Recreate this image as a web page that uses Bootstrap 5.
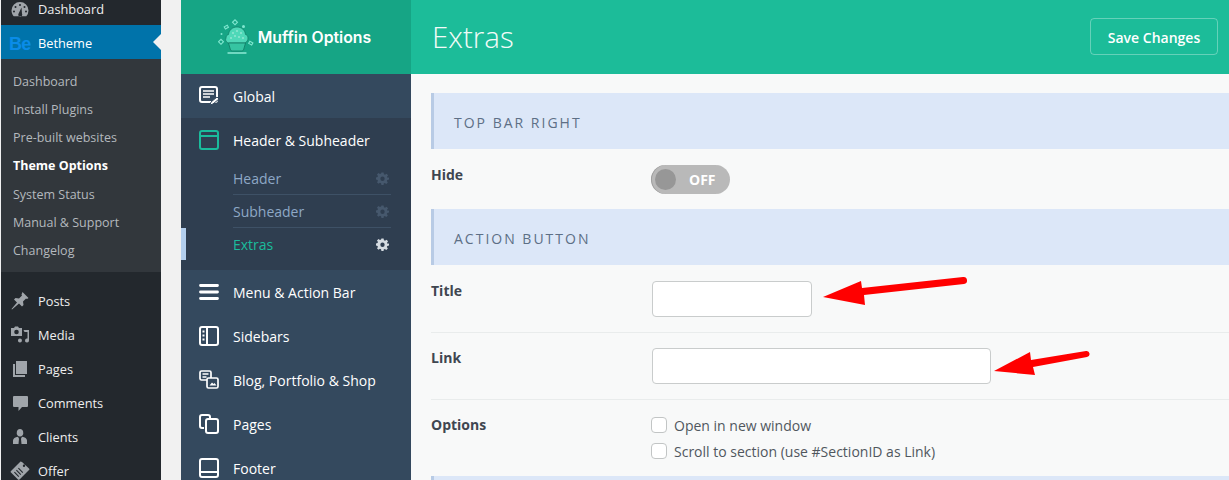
<!DOCTYPE html>
<html lang="en">
<head>
<meta charset="utf-8">
<title>Muffin Options</title>
<link href="https://cdn.jsdelivr.net/npm/bootstrap@5.3.0/dist/css/bootstrap.min.css" rel="stylesheet">
<style>
html,body{height:480px;overflow:hidden}
body{font-family:"Open Sans","Noto Sans",sans-serif;background:#f1f1f1;font-size:14px;color:#3c434a}
.shell{height:480px;overflow:hidden}
.wp-side{width:160px;margin-left:1px;margin-right:20px;background:#23282d;flex:none;height:488px;margin-top:-8px}
.wp-row{height:34px;flex:none;color:#eee;font-size:12.8px;padding:3px 0 0 9px;gap:8px;text-decoration:none}
.wp-row svg{width:20px;height:20px;flex:none;fill:#a0a5aa}
.wp-first{height:33px}
.wp-active{background:#0073aa;color:#fff;position:relative}
.wp-active::after{content:"";position:absolute;right:0;top:9px;border:8px solid transparent;border-right-color:#f1f1f1;border-left-width:0}
.be-logo{width:20px;font:900 18px/1 "Liberation Sans",sans-serif;color:#0a8ce8;letter-spacing:-.8px;margin-left:-1px;margin-right:1px}
.wp-sub{background:#32373c;padding:8px 0;margin-bottom:11px;flex:none}
.wp-sub a{display:block;height:28.15px;line-height:30px;font-size:12.5px;padding-left:12px;color:#b4b9be;text-decoration:none}
.wp-sub a.on{color:#fff;font-weight:700}
.mf-side{width:230px;flex:none;background:#34495e;position:relative}
.mf-logo{height:74px;background:#16a585;color:#fff;font:600 15.8px "Inter",sans-serif;gap:4px;padding-right:3px}
.mf-logo svg{width:36px;height:36px}
.mf-row{height:44px;padding-left:18px;gap:14px;color:#fff;font-size:14px;text-decoration:none}
.mf-row svg{width:20px;height:20px;flex:none;fill:none;stroke:#fff;stroke-width:2}
.mf-open{background:#2f3e50;height:152px}
.mf-open .mf-row svg{stroke:#1abc9c}
.mf-subs{padding:0 20px 0 52px}
.mf-subs a{height:33px;padding-top:1px;color:#8ea8c6;font-size:14px;text-decoration:none;border-bottom:1px solid #3e5166}
.mf-subs a:last-child{border-bottom:0;padding-top:0}
.mf-subs a.cur{color:#1abc9c}
.mf-subs svg{width:13px;height:13px;fill:#46586d;margin-right:2px}
.mf-subs a.cur svg{fill:#d5dbe1}
.mf-mark{position:absolute;left:0;top:228px;width:5px;height:32px;background:#b3cfee}
.mf-main{flex:1 1 auto;min-width:0;background:#f8f9f9;position:relative}
.mf-top{height:74px;background:#1cbc99;padding:0 11px 0 21px}
.mf-top h1{font-size:29.5px;font-weight:300;color:#f2fbf8;margin:0}
.btn.save-btn{width:128px;height:37px;padding:1px 0 0;margin-bottom:1px;color:#fff;font-size:14px;font-weight:600;border:1px solid rgba(255,255,255,.32);border-radius:4px}
.mf-body{padding:19px 0 0 20px}
.sec-head{height:56px;background:#dce7f8;border-left:3px solid #b8cbe5;padding:3px 0 0 20px;color:#5d6f86;font-size:14px;letter-spacing:2px;text-transform:uppercase}
.fld{display:flex}
.fld-label{width:220px;flex:none;font-weight:700;color:#3f4650;font-size:14px}
.fld-hide{height:60px;padding-top:15px;line-height:20px}
.fld-hide .fld-label{padding-top:1px}
.tgl{width:79px;height:29px;border-radius:15px;background:#b9b9b9;color:#fff;font-weight:700;font-size:14px;gap:13px;padding-left:4px;margin-top:1px;box-shadow:inset 1px 0 0 #a0a0a0}
.tgl i{width:21px;height:21px;border-radius:50%;background:#979797;display:block}
.fld-in{height:67.5px;padding-top:15.5px;border-bottom:1px solid #e9ecec;line-height:20px}
.fld-in .form-control{height:36px;border-radius:4px;border:1px solid #c9cccc;margin-left:1px;box-shadow:none}
.w160{width:160px}.w339{width:339px}
.fld-opt{padding-top:13.5px;height:76px}
.fld-opt>div:last-child{margin-top:-1.5px}
.opt-line{height:26px;color:#50575e;font-size:14px;gap:7px}
.form-check-input.opt-box{width:16px;height:16px;margin:0;border:1px solid #c2c5c5;border-radius:4px;background-color:#fff}
.arrows{position:absolute;left:0;top:0;width:818px;height:480px;pointer-events:none}
</style>
</head>
<body>
<div class="shell d-flex">
  <nav class="wp-side d-flex flex-column">
    <a class="wp-row wp-first d-flex align-items-center" href="#"><svg viewBox="0 0 20 20"><path fill-rule="evenodd" d="M10 2a8.500 8.500 0 0 0-8.500 8.500c0 2.200.8 4.200 2.200 5.700h12.600a8.500 8.500 0 0 0 2.200-5.700A8.500 8.500 0 0 0 10 2zm0 2a1 1 0 1 1 0 2 1 1 0 0 1 0-2zM5.500 6a1 1 0 1 1 0 2 1 1 0 0 1 0-2zm9 0a1 1 0 1 1 0 2 1 1 0 0 1 0-2zM4 10.500a1 1 0 1 1 0 2 1 1 0 0 1 0-2zm12 0a1 1 0 1 1 0 2 1 1 0 0 1 0-2zM11.500 7.500l.5 6.300a2 2 0 1 1-3.500 0z"/></svg><span>Dashboard</span></a>
    <a class="wp-row wp-active d-flex align-items-center" href="#"><span class="be-logo">Be</span><span>Betheme</span></a>
    <div class="wp-sub">
      <a href="#">Dashboard</a><a href="#">Install Plugins</a><a href="#">Pre-built websites</a><a class="on" href="#">Theme Options</a><a href="#">System Status</a><a href="#">Manual &amp; Support</a><a href="#">Changelog</a>
    </div>
    <a class="wp-row d-flex align-items-center" href="#"><svg viewBox="0 0 20 20"><path d="M12.500 1l6 6-1.500 1-1-.5-3 3 .5 3.500-1.500 1.500-3-3L2 18.500l-.5-.5 5.500-6.500-3-3L5.500 7 9 7.500l3-3-.5-1z"/></svg><span>Posts</span></a>
    <a class="wp-row d-flex align-items-center" href="#"><svg viewBox="0 0 20 20"><path fill-rule="evenodd" d="M1 3h3l1-1.500h3L9 3h3v8H1zm5.500 1.700a2.300 2.300 0 1 0 0 4.600 2.300 2.300 0 0 0 0-4.600zM13.500 5H19v10.500a2 2 0 1 1-1.500-1.900V7h-3zM10 13.500a2 2 0 1 1-.1 4 2 2 0 0 1 .1-4z"/></svg><span>Media</span></a>
    <a class="wp-row d-flex align-items-center" href="#"><svg viewBox="0 0 20 20"><path d="M6 2h11v13H6zM3 5h2v11h10v2H3z"/></svg><span>Pages</span></a>
    <a class="wp-row d-flex align-items-center" href="#"><svg viewBox="0 0 20 20"><path d="M4 3h13a1 1 0 0 1 1 1v9a1 1 0 0 1-1 1h-5l-3.500 4v-4H4a1 1 0 0 1-1-1V4a1 1 0 0 1 1-1z"/></svg><span>Comments</span></a>
    <a class="wp-row d-flex align-items-center" href="#"><svg viewBox="0 0 20 20"><path d="M10 2a3.200 3.200 0 0 1 3.200 3.500A3.200 3.200 0 0 1 10 9.500a3.200 3.200 0 0 1-3.200-4A3.200 3.200 0 0 1 10 2zM3 17v-3.500c0-2 2-3.500 5-3.800l1 2-.5 5.300zm14 0v-3.500c0-2-2-3.500-5-3.800l-1 2 .5 5.300z"/></svg><span>Clients</span></a>
    <a class="wp-row d-flex align-items-center" href="#"><svg viewBox="0 0 20 20"><path fill-rule="evenodd" d="M12 1l7 6.500a1 1 0 0 1 0 1.500L9.500 18.500a1 1 0 0 1-1.500 0L1 11.500a1 1 0 0 1 0-1.500L10.500 .5zM14 3.500a1.200 1.200 0 1 0 0 2.400 1.200 1.200 0 0 0 0-2.400zM8.800 6.800l-.8.800 4.400 4.400.8-.8zM6.800 8.800l-.8.800 4.400 4.400.8-.8zM4.800 10.800l-.8.800 4.400 4.400.8-.8z"/></svg><span>Offer</span></a>
  </nav>

  <aside class="mf-side">
    <div class="mf-logo d-flex align-items-center justify-content-center">
      <svg viewBox="0 0 36 36"><g fill="none" stroke="#7fe6cf" stroke-width="1.100"><rect x="15.500" y="1.500" width="3.500" height="3.500" transform="rotate(45 17 3)"/><rect x="6.500" y="7" width="3.500" height="2.500" transform="rotate(-30 8 8)"/><rect x="1.500" y="21" width="3.500" height="3.500" transform="rotate(45 3 22.500)"/><rect x="31" y="22.500" width="3.500" height="2.500" transform="rotate(30 32 24)"/></g><circle cx="25.500" cy="7.500" r="1.500" fill="#7fe6cf"/><circle cx="3.500" cy="15" r="1" fill="#7fe6cf"/><path d="M10 24c-2-1-3-3-2-5 0-2 1-3 2.500-3.500C11 11 14.500 8 19 8s8 3 8.500 7.500C29 16 30 17 30 19c0 2-1 4-3 5z" fill="#4fd8b8" stroke="#0f7a63" stroke-width=".7"/><path d="M10.500 24h17l-2 7c-.2.700-.8 1-1.500 1H14c-.7 0-1.300-.3-1.500-1z" fill="#36c4a2" stroke="#0f7a63" stroke-width=".8"/><g fill="#d4f7ee"><circle cx="15" cy="14" r=".7"/><circle cx="19" cy="12" r=".7"/><circle cx="23" cy="14" r=".7"/><circle cx="17" cy="17" r=".7"/><circle cx="21" cy="18" r=".7"/><circle cx="13" cy="19" r=".7"/><circle cx="25" cy="19" r=".7"/></g><path d="M10 34h18" stroke="#8fe9d5" stroke-width="1.300" stroke-linecap="round"/></svg>
      <span>Muffin Options</span>
    </div>
    <a class="mf-row d-flex align-items-center" href="#"><svg viewBox="0 0 20 20"><rect x="1" y="1" width="17" height="15" rx="2"/><path d="M4 5h11M4 8h11M4 11h7" stroke-width="1.600"/><path d="M11 19l1-3 6-5 2 2-6 5z" fill="#fff" stroke="#34495e" stroke-width="1"/></svg><span>Global</span></a>
    <div class="mf-open">
      <a class="mf-row d-flex align-items-center" href="#"><svg viewBox="0 0 20 20"><rect x="1" y="1" width="18" height="18" rx="2"/><path d="M1 6h18"/></svg><span>Header &amp; Subheader</span></a>
      <div class="mf-subs d-flex flex-column">
        <a class="d-flex align-items-center justify-content-between" href="#"><span>Header</span><svg viewBox="0 0 24 24"><path fill-rule="evenodd" d="M10 1h4l.7 3.200 2 .8 2.700-1.800 2.800 2.800-1.800 2.700.8 2L24 10v4l-3.200.7-.8 2 1.800 2.700-2.800 2.800-2.700-1.800-2 .8L14 24h-4l-.7-3.200-2-.8-2.700 1.800-2.800-2.800L3.600 16.700l-.8-2L0 14v-4l2.800-.7.8-2-1.800-2.700L4.600 1.800l2.700 1.800 2-.8zM12 8.500a4 4 0 1 0 0 8 4 4 0 0 0 0-8z"/></svg></a>
        <a class="d-flex align-items-center justify-content-between" href="#"><span>Subheader</span><svg viewBox="0 0 24 24"><path fill-rule="evenodd" d="M10 1h4l.7 3.200 2 .8 2.700-1.800 2.800 2.800-1.800 2.700.8 2L24 10v4l-3.200.7-.8 2 1.800 2.700-2.800 2.800-2.700-1.800-2 .8L14 24h-4l-.7-3.200-2-.8-2.700 1.800-2.800-2.800L3.600 16.700l-.8-2L0 14v-4l2.800-.7.8-2-1.800-2.700L4.600 1.800l2.700 1.800 2-.8zM12 8.500a4 4 0 1 0 0 8 4 4 0 0 0 0-8z"/></svg></a>
        <a class="cur d-flex align-items-center justify-content-between" href="#"><span>Extras</span><svg viewBox="0 0 24 24"><path fill-rule="evenodd" d="M10 1h4l.7 3.200 2 .8 2.700-1.800 2.800 2.800-1.800 2.700.8 2L24 10v4l-3.200.7-.8 2 1.800 2.700-2.800 2.800-2.700-1.800-2 .8L14 24h-4l-.7-3.200-2-.8-2.700 1.800-2.800-2.800L3.600 16.700l-.8-2L0 14v-4l2.800-.7.8-2-1.800-2.700L4.600 1.800l2.700 1.800 2-.8zM12 8.500a4 4 0 1 0 0 8 4 4 0 0 0 0-8z"/></svg></a>
      </div>
    </div>
    <div class="mf-mark"></div>
    <a class="mf-row d-flex align-items-center" href="#"><svg viewBox="0 0 20 20"><path d="M1.500 3.500h17M1.500 10h17M1.500 16.500h17" stroke-width="2.800" stroke-linecap="round"/></svg><span>Menu &amp; Action Bar</span></a>
    <a class="mf-row d-flex align-items-center" href="#"><svg viewBox="0 0 20 20"><rect x="1" y="1" width="18" height="18" rx="2"/><path d="M8 1v18"/><path d="M3.500 5.500h2M3.500 9.500h2M3.500 13.500h2" stroke-width="1.800"/></svg><span>Sidebars</span></a>
    <a class="mf-row d-flex align-items-center" href="#"><svg viewBox="0 0 20 20"><rect x="1" y="1" width="11" height="9" rx="1.500" stroke-width="1.700"/><path d="M3.500 4h6M3.500 7h4" stroke-width="1.300"/><rect x="8" y="8" width="11" height="10" rx="1.500" fill="#34495e" stroke-width="1.700"/><path d="M10.500 15.500l2.500-3 1.500 1.500 1-1 2 2.500z" fill="#fff" stroke="none"/></svg><span>Blog, Portfolio &amp; Shop</span></a>
    <a class="mf-row d-flex align-items-center" href="#"><svg viewBox="0 0 20 20"><path d="M5 14H3a2 2 0 0 1-2-2V3a2 2 0 0 1 2-2h6a2 2 0 0 1 2 2v1"/><rect x="7" y="5" width="12" height="14" rx="2"/></svg><span>Pages</span></a>
    <a class="mf-row d-flex align-items-center" href="#"><svg viewBox="0 0 20 20"><rect x="1" y="1" width="18" height="18" rx="2"/><path d="M1 14h18"/></svg><span>Footer</span></a>
  </aside>

  <main class="mf-main">
    <div class="mf-top d-flex align-items-center justify-content-between">
      <h1>Extras</h1>
      <button class="btn save-btn" type="button">Save Changes</button>
    </div>
    <div class="mf-body">
      <div class="sec-head d-flex align-items-center">Top Bar Right</div>
      <div class="fld fld-hide">
        <div class="fld-label">Hide</div>
        <div class="tgl d-flex align-items-center"><i></i><span>OFF</span></div>
      </div>
      <div class="sec-head d-flex align-items-center">Action Button</div>
      <div class="fld fld-in">
        <div class="fld-label">Title</div>
        <input class="form-control w160" type="text" aria-label="Title">
      </div>
      <div class="fld fld-in">
        <div class="fld-label">Link</div>
        <input class="form-control w339" type="text" aria-label="Link">
      </div>
      <div class="fld fld-opt">
        <div class="fld-label">Options</div>
        <div>
          <label class="opt-line d-flex align-items-center"><input class="form-check-input opt-box" type="checkbox">Open in new window</label>
          <label class="opt-line d-flex align-items-center"><input class="form-check-input opt-box" type="checkbox">Scroll to section (use #SectionID as Link)</label>
        </div>
      </div>
      <div class="sec-head"></div>
    </div>
    <svg class="arrows" viewBox="0 0 818 480"><g fill="#f00"><path d="M412 297L450 281l1 7 101-11a3.500 3.500 0 0 1 1 7l-100 11 1 10z"/><path d="M583 371L619 352l1 8 55-9a3 3 0 0 1 1 6l-54 10 2 8z"/></g></svg>
  </main>
</div>
<script src="https://cdn.jsdelivr.net/npm/bootstrap@5.3.0/dist/js/bootstrap.bundle.min.js"></script>
</body>
</html>
